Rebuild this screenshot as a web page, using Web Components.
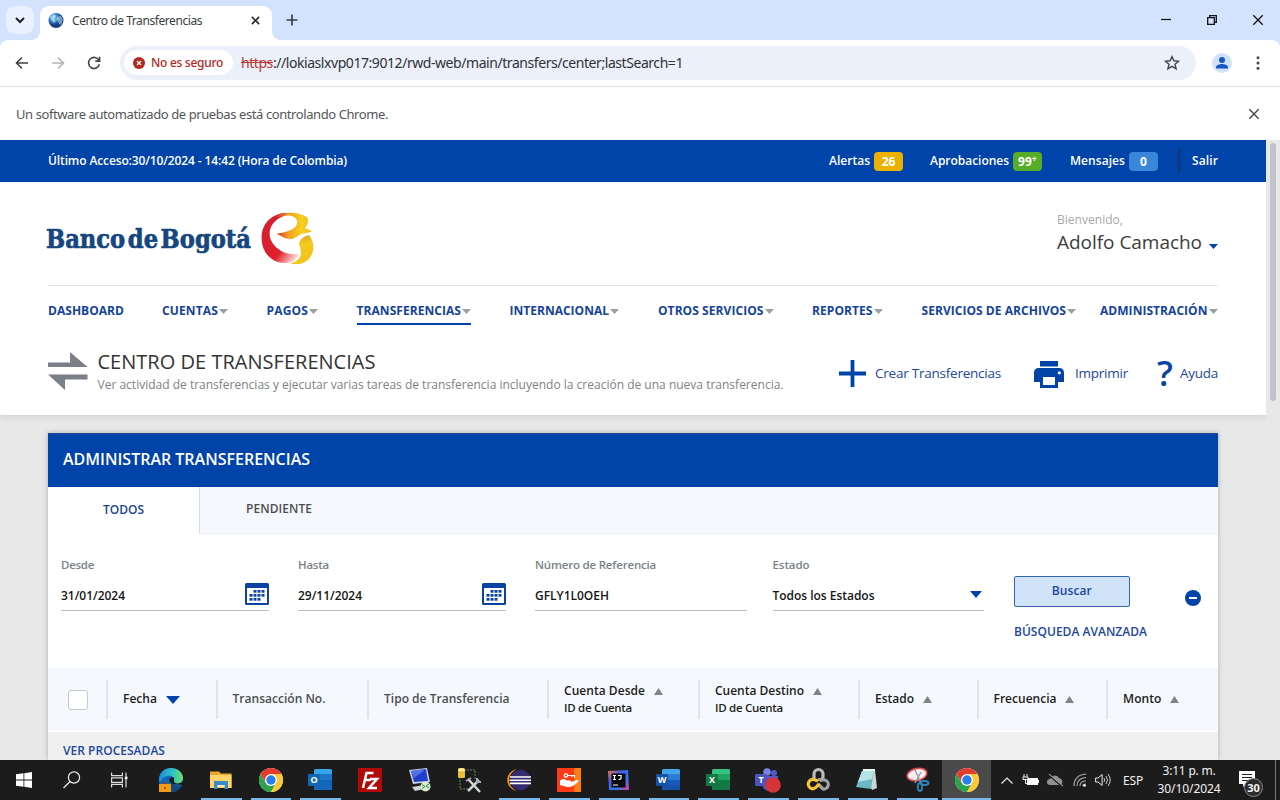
<!DOCTYPE html>
<html lang="es">
<head>
<meta charset="utf-8">
<title>Centro de Transferencias</title>
<style>
html,body{margin:0;height:800px;overflow:hidden}
body{font-family:"Open Sans","Noto Sans",sans-serif;background:#fff}
</style>
</head>
<body>
<desktop-screen></desktop-screen>
<script>
const define = (name, css, html, ready) => customElements.define(name, class extends HTMLElement {
  connectedCallback() {
    if (this.shadowRoot) return;
    const root = this.attachShadow({mode: 'open'});
    const markup = typeof html === 'function' ? html(this) : html;
    root.innerHTML = `<style>*{box-sizing:border-box}${css}</style>${markup}`;
    if (ready) ready(this, root);
  }
});

/* Inline text whose tracking is adjusted to a given width. */
define('fit-text', ':host{display:inline-block;white-space:nowrap;flex:none}span{display:inline-block;white-space:nowrap}', '<span><slot></slot></span>', (el, root) => {
  const w = parseFloat(el.getAttribute('w'));
  if (!w) return;
  const span = root.querySelector('span');
  const n = el.textContent.length;
  const natural = span.getBoundingClientRect().width;
  span.style.letterSpacing = ((w - natural) / n) + 'px';
  el.style.width = w + 'px';
});

const chrome = `<circle cx="12" cy="12" r="12" fill="#fff"/><path d="M1.6 6A12 12 0 0 0 12 24l5.2-9L12 12 6.8 15z" fill="#2ba24c"/><path d="M22.4 6A12 12 0 0 1 12 24l5.2-9L12 12V6z" fill="#fcc934"/><path d="M12 6h10.400A12 12 0 0 0 1.600 6l5.200 9z" fill="#e33b2e"/><circle cx="12" cy="12" r="6" fill="#fff"/><circle cx="12" cy="12" r="4.700" fill="#2b7de9"/>`;
const office = (l, a, b, c, d) => `<rect x="6" y="1" width="18" height="21" rx="1.500" fill="${a}"/><path d="M6 6h18v6H6z" fill="${b}"/><path d="M6 12h18v5H6z" fill="${c}"/><path d="M6 17h18v3.500a1.500 1.500 0 0 1-1.500 1.500h-15A1.500 1.500 0 0 1 6 20.500z" fill="${d}"/><rect x="0" y="6" width="12" height="12" rx="1" fill="${d}"/><text x="6" y="15.200" font-family="Open Sans,sans-serif" font-weight="700" font-size="9" text-anchor="middle" fill="#fff">${l}</text>`;
const calDots = [[4,0],[8,0],[12,0],[0,4],[4,4],[8,4],[12,4],[0,8],[4,8],[8,8]].map(([x,y]) => `<rect x="${x+4.500}" y="${y+7}" width="3" height="2.700" fill="#0a43a3"/>`).join('');

const icons = {
  down: [16,16,'<path d="M4 6l4 4 4-4" fill="none" stroke="#202124" stroke-width="2"/>'],
  globe: [16,16,'<defs><radialGradient id="g" cx=".35" cy=".3"><stop offset="0" stop-color="#9ad8f5"/><stop offset=".5" stop-color="#3a8ddb"/><stop offset="1" stop-color="#153f82"/></radialGradient></defs><circle cx="8" cy="7.500" r="7.500" fill="url(#g)"/><path d="M2 4l4-3 2 2-2 3 2 2-2 2-3-3zM9 4l4-1 2 4-2 5-2-1-1-3-2-1z" fill="#d4effc" opacity=".5"/>'],
  tabx: [10,10,'<path d="M1 1l8 8M9 1L1 9" stroke="#1f2023" stroke-width="1.700"/>'],
  plus: [12,12,'<path d="M6 .5v11M.5 6h11" stroke="#3b3e44" stroke-width="1.700"/>'],
  min: [10,10,'<path d="M0 4.500h10" stroke="#111" stroke-width="1.200"/>'],
  restore: [10,10,'<path d="M.7 2.700h6.600v6.600H.7zM2.700 2.500V.7h6.600v6.600H7.500" fill="none" stroke="#111" stroke-width="1.300"/>'],
  close: [10,10,'<path d="M.3.3l9.400 9.400M9.700.3L.3 9.700" stroke="#111" stroke-width="1.300"/>'],
  close2: [10,10,'<path d="M.3.3l9.400 9.400M9.700.3L.3 9.700" stroke="#474747" stroke-width="1.400"/>'],
  back: [14,14,'<path d="M13 7H2M7 1.500L1.500 7 7 12.500" fill="none" stroke="#3f4247" stroke-width="1.600"/>'],
  fwd: [14,14,'<path d="M1 7h11M7 1.500L12.500 7 7 12.500" fill="none" stroke="#b3b5b8" stroke-width="1.600"/>'],
  reload: [14,14,'<path d="M11.900 4.300A5.500 5.500 0 1 0 12.400 8.300M12.600 .8v4.300H8.300" fill="none" stroke="#3f4247" stroke-width="1.600"/>'],
  danger: [12,12,'<circle cx="6" cy="6" r="6" fill="#b3261e"/><path d="M4 4l4 4M8 4L4 8" stroke="#fff" stroke-width="1.400"/>'],
  star: [16,16,'<path d="M8 1.600l1.900 4.200 4.600.4-3.500 3 1.100 4.500L8 11.300l-4.100 2.400L5 9.200l-3.500-3 4.600-.4z" fill="none" stroke="#44474c" stroke-width="1.400"/>'],
  user: [20,20,'<circle cx="10" cy="10" r="10" fill="#d0e2fb"/><circle cx="10" cy="7" r="3" fill="#1557c0"/><path d="M4 15.500v-1.200c0-2.200 4-3.300 6-3.300s6 1.100 6 3.300v1.200z" fill="#1557c0"/>'],
  dots: [4,14,'<circle cx="2" cy="1.700" r="1.500" fill="#44474c"/><circle cx="2" cy="7" r="1.500" fill="#44474c"/><circle cx="2" cy="12.300" r="1.500" fill="#44474c"/>'],
  brand: [54,54,'<defs><linearGradient id="r" x1="0" y1="0" x2=".95" y2=".9"><stop offset=".1" stop-color="#cf2030"/><stop offset=".68" stop-color="#e2202c"/><stop offset=".8" stop-color="#ea6a6c"/><stop offset="1" stop-color="#fde3dc"/></linearGradient><linearGradient id="y" x1=".3" y1="0" x2=".5" y2="1"><stop offset="0" stop-color="#dd9c20"/><stop offset=".35" stop-color="#f5c91f"/><stop offset="1" stop-color="#f3c41c"/></linearGradient><linearGradient id="z" x1="0" y1="0" x2="1" y2="0"><stop offset="0" stop-color="#df2a28"/><stop offset=".35" stop-color="#f0a023"/><stop offset=".7" stop-color="#f8cf1e"/><stop offset="1" stop-color="#f0bf20"/></linearGradient></defs><path d="M25 .8C10 2 .5 12 .6 26 .7 41 11 51 24 51c7 0 12-3 14-9C31 43 23 42 16 36 5 27 5 10 25 3z" fill="url(#r)"/><path d="M15 4C24-1 38 0 46 5c2 4 1 8-2 11l7 3c-3 2-6 2-9 2.500-6 2-8 6-13 5.500-5 0-9-3-13-5.500 9-1 15-3 19-7.500 3-5 0-10-7-10.500-4-.2-8 .5-12 2z" fill="url(#z)"/><path d="M38 32c1-5 5-8 10-9 6 8 6 18-1 25-5 4-11 5-18 3.500C40 49 42 42 38 32z" fill="url(#y)"/>'],
  swap: [40,38,'<path d="M0 10.500h22V0l17.500 15H0zM39.500 22.500H0L17 38V27.500h22.500z" fill="#7b7f88"/>'],
  add: [27,27,'<path d="M13.500 0v27M0 13.500h27" stroke="#0043a9" stroke-width="3.800"/>'],
  print: [30,27,'<path d="M6 0h18v5.500H6z" fill="#0043a9"/><path d="M4.500 7h21A4.500 4.500 0 0 1 30 11.500V21h-6v6H6v-6H0v-9.500A4.500 4.500 0 0 1 4.500 7z" fill="#0043a9"/><path d="M9 16h12v8H9z" fill="#fff"/><circle cx="25.300" cy="11.800" r="1.600" fill="#fff"/>'],
  cal: [24,22,`<path d="M0 1.500A1.500 1.500 0 0 1 1.500 0h21A1.500 1.500 0 0 1 24 1.500v19a1.500 1.500 0 0 1-1.500 1.500h-21A1.500 1.500 0 0 1 0 20.500z" fill="#0a43a3"/><path d="M2 5h20v15H2z" fill="#fff"/>${calDots}`],
  caret: [9,5,'<path d="M0 0h9L4.500 5z" fill="#9a9fa3"/>'],
  bcaret: [9,5,'<path d="M0 0h9L4.500 5z" fill="#0043a9"/>'],
  select: [12,7,'<path d="M0 0h12L6 7z" fill="#0043a9"/>'],
  desc: [14,8,'<path d="M0 0h14L7 8z" fill="#0043a9"/>'],
  asc: [9,7,'<path d="M0 7h9L4.500 0z" fill="#808487"/>'],
  minus: [16,16,'<circle cx="8" cy="8" r="8" fill="#0043a9"/><path d="M4 8h8" stroke="#fff" stroke-width="2"/>'],
  win: [16,16,'<path d="M0 2.300l7.500-1v6.300H0zM8.300 1.200L16 0v7.600H8.300zM0 8.400h7.500v6.300L0 13.700zM8.300 8.400H16V16l-7.700-1.200z" fill="#fff"/>'],
  search: [18,18,'<circle cx="11" cy="6.500" r="5.600" fill="none" stroke="#eee" stroke-width="1.200"/><path d="M7 10.500L.5 17" stroke="#eee" stroke-width="1.300"/>'],
  task: [18,16,'<path d="M.6.500v3.200h10.800V.5M.6 15.500v-3.200h10.800v3.200M.6 5.800h10.800v4.500H.6zM15 .5v4M15 8v7.500" fill="none" stroke="#ddd" stroke-width="1.200"/><path d="M13.800 4.500h2.600v3h-2.600z" fill="#fff"/>'],
  edge: [24,24,'<defs><linearGradient id="e"><stop offset="0" stop-color="#168ee0"/><stop offset=".6" stop-color="#30c6bc"/><stop offset="1" stop-color="#73dc68"/></linearGradient></defs><circle cx="12" cy="12" r="12" fill="#1466b8"/><path d="M0 12C0 4 6 0 12 0s12 4 12 10c0 4-3 6-6 6-4 0-5-2-4-4 1-3-2-5-5-4-4 0-8 4-8 8z" fill="url(#e)"/><path d="M14 12c-1 5 4 7 9 5-2 4-6 7-10 7-2-3-3-7 1-12z" fill="#124b80"/><path d="M14 9c2 1 0 4 2 6 3 1 6 0 8-2v4l-10-1-4-3c0-2 2-4 4-4z" fill="#1c1c1c"/><rect x="0" y="16" width="12" height="8" fill="#f39a16"/><path d="M4 16v-1.500h4V16" fill="none" stroke="#8a4e06"/><path d="M5.300 19h1.500v2H5.300z" fill="#8a4e06"/>'],
  folder: [22,20,'<path d="M0 1.500h9l2 2h10.500V18H0z" fill="#e9a72b"/><path d="M0 5h21.500v13H0z" fill="#ffd56a"/><path d="M4 11h14v8h-3.500v-4h-7v4H4z" fill="#368dc9"/><path d="M7.500 15h7v2h-7z" fill="#f5e7ae"/>'],
  chrome: [24,24,chrome],
  outlook: [24,24,office('O','#38a7e8','#1b78c8','#0f68b5','#1467b8')],
  fz: [24,24,'<path d="M0 0h24v24H0z" fill="#b30808"/><path d="M5 20L8.500 5h7M7 12h6M12 11h7l-8 9h8" fill="none" stroke="#fff" stroke-width="2.500"/>'],
  remote: [24,24,'<path d="M1 2l18-2 3 14-17 2z" fill="#c8d4e2"/><path d="M3 3l15-2 2 12-14 1z" fill="#203dcb"/><path d="M3 3l15-2-12 9z" fill="#526fe4"/><path d="M4 19l12-2v4l-9 2z" fill="#ced4d6"/><circle cx="17.500" cy="18.500" r="5" fill="#d9edd2"/><path d="M14 16.500l3 2-3 2M21 16l-3 2 3 2" fill="none" stroke="#378b39"/>'],
  tools: [24,24,'<path d="M7 2h11v10M3 9v12h8" fill="none" stroke="#668e50" stroke-dasharray="2 1"/><rect x="1" y="0" width="7" height="10" rx="1.500" fill="#ecbd3c"/><ellipse cx="4.500" cy="1.700" rx="3.300" ry="1.500" fill="#fff0a0"/><path d="M11 11l12 13M22 12L11 23" stroke="#d1d5d8" stroke-width="2.500"/><path d="M9 13l5-3M20 10v4h4" stroke="#a7acb0" stroke-width="2" fill="none"/>'],
  eclipse: [24,22,'<path d="M10 0C-3 3-3 19 10 22-1 17 0 5 10 0z" fill="#f7941e"/><circle cx="13.500" cy="11" r="10.300" fill="#352c70"/><path d="M3 8h21M2.500 11.200h21.500M3 14.400h21" stroke="#fff" stroke-width="1.600"/>'],
  hand: [24,24,'<path d="M0 0h24v24H0z" fill="#ff3a17"/><path d="M17 0h7v24h-7z" fill="#ff7b16"/><path d="M3 12.500c3-2 5-2 7 0h3c2 0 2 2 0 2l7-2.500c2 0 2 1 1 2l-5 4c-3 1.500-6 1-8 .5L3 17z" fill="#fff"/><circle cx="9" cy="7.500" r="1.700" fill="none" stroke="#fff" stroke-width="1.300"/><path d="M11 7.500h6.500v2M15 7.500v1.800" fill="none" stroke="#fff" stroke-width="1.200"/>'],
  ij: [21,21,'<defs><linearGradient id="j" x1="0" y1="0" x2="1" y2="1"><stop offset="0" stop-color="#f77834"/><stop offset=".35" stop-color="#4a59e8"/><stop offset=".65" stop-color="#2781f4"/><stop offset="1" stop-color="#ec3a8f"/></linearGradient></defs><path d="M0 1l20-1 1 20H1z" fill="url(#j)"/><path d="M3.500 3.500h14v14h-14z" fill="#08080b"/><path d="M5 5.500h3M6.500 5.500v4M5 9.500h3M10 5.500h3v2.500q0 1.500-2.500 1.500M5 15h5" fill="none" stroke="#fff" stroke-width="1.200"/>'],
  word: [24,24,office('W','#41a5ee','#2b7cd3','#185abd','#1651aa')],
  excel: [24,24,office('X','#33c481','#21a366','#107c41','#147744')],
  teams: [26,25,'<circle cx="12" cy="4" r="3.800" fill="#7b83eb"/><circle cx="19" cy="5" r="3" fill="#5059c9"/><path d="M7 8h16v9q-2 6-8 6-6 0-8-6z" fill="#5059c9"/><rect x="0" y="6" width="12" height="12" rx="1" fill="#4b53bc"/><text x="6" y="15" text-anchor="middle" font-family="Open Sans,sans-serif" font-weight="700" font-size="9" fill="#fff">T</text><circle cx="18" cy="17" r="7.800" fill="#d63438"/>'],
  knot: [24,24,'<g fill="none" stroke-width="3.200"><path d="M8 11V6a4.500 4.500 0 0 1 9 0v3q0 2-3 4" stroke="#b8babc"/><path d="M12 11.500l6.500.5a4.500 4.500 0 1 1-1.500 9l-5-5" stroke="#a0a4a7"/><path d="M12 13l-4-1.500a4.600 4.600 0 1 0-2 9.300q4 0 7-5" stroke="#f5c432"/></g>'],
  note: [22,22,'<path d="M7 2l12-1 2 18-5 2z" fill="#cfd3d1"/><path d="M6 2l12-1-3 19L0 18z" fill="#69bac5"/><path d="M6 2l12-1-2 9-14 3z" fill="#b3e5e7"/><path d="M7 1h12" stroke="#eef5f4" stroke-width="2"/>'],
  snip: [23,24,'<ellipse cx="11" cy="6.500" rx="10" ry="6" fill="#f7eeee" stroke="#d64a4d" stroke-width="1.600" transform="rotate(-12 11 6.500)"/><path d="M9 2l6 13M15 4L9 15" stroke="#9a9fa5" stroke-width="1.500"/><ellipse cx="14" cy="19" rx="2.200" ry="4" fill="none" stroke="#2f87bc" stroke-width="1.800"/><ellipse cx="18.500" cy="15" rx="4" ry="2" fill="none" stroke="#2f87bc" stroke-width="1.800"/>'],
  up: [12,7,'<path d="M.5 6.500L6 1l5.500 5.500" fill="none" stroke="#eee" stroke-width="1.200"/>'],
  battery: [17,12,'<path d="M5 4h11v7H5zM16 6h1v3h-1z" fill="#fff"/><path d="M1 3h5v2.500H1zM2 0v3M5 0v3M3.500 5v4.500H5" fill="#222" stroke="#eee"/>'],
  cloud: [17,13,'<path d="M3 11a3 3 0 0 1 0-6 5 5 0 0 1 9-1 4 4 0 0 1 2 7z" fill="#919191"/><path d="M1 0l15 13" stroke="#222" stroke-width="2"/><path d="M2 0l14 12" stroke="#bbb"/>'],
  wifi: [14,14,'<g fill="none" stroke="#aaa" stroke-width="1.200"><path d="M1 13Q1 2 13 1M4 13Q4 5 13 4.500M7 13q0-5 6-5"/><path d="M10 13q0-2 3-2"/></g><circle cx="11.500" cy="12.500" r="1.300" fill="#fff"/>'],
  sound: [16,14,'<path d="M.6 5h2.500l4-3.500v11L3.100 9H.6z" fill="none" stroke="#eee"/><path d="M9 5q1.500 2 0 4M11 3q3 4 0 8M13 1q4.500 6 0 12" fill="none" stroke="#ccc"/>'],
  notice: [17,17,'<path d="M0 0h16v13H7l-3 3v-3H0z" fill="#fff"/><path d="M3 3.500h10M3 6.500h10M3 9.500h7" stroke="#222" stroke-width="1.200"/>']
};
define('ui-icon', ':host{display:inline-flex;flex:none}svg{display:block;overflow:visible}', el => {
  const [w, h, body] = icons[el.getAttribute('name')];
  const s = parseFloat(el.getAttribute('scale') || 1);
  return `<svg width="${w*s}" height="${h*s}" viewBox="0 0 ${w} ${h}">${body}</svg>`;
});

define('tab-strip', `
:host{display:flex;height:40px;background:#d3e3fd;padding-left:6px;align-items:flex-start;font-family:"Noto Sans",sans-serif}
.menu{width:28px;height:28px;margin-top:6px;border-radius:9px;background:#e9f1fe;display:grid;place-items:center}
.tab{position:relative;margin:6px 0 0 6px;width:232px;height:34px;background:#fff;border-radius:9px 9px 0 0;display:flex;align-items:center;padding:0 12px 5px 8px;font-size:12px;color:#3a3d41}
.tab:before,.tab:after{content:"";position:absolute;bottom:0;width:8px;height:8px}
.tab:before{left:-8px;background:radial-gradient(circle at 0 0,transparent 7.5px,#fff 8px)}
.tab:after{right:-8px;background:radial-gradient(circle at 100% 0,transparent 7.5px,#fff 8px)}
.tab fit-text{margin-left:8px;flex:1}.tab ui-icon:last-child{margin-left:auto}
.add{margin:14px 0 0 14px}.win{margin:15px 17.500px 0 auto;display:flex;gap:36px}`,
`<div class="menu"><ui-icon name="down"></ui-icon></div>
<div class="tab"><ui-icon name="globe"></ui-icon><fit-text w="130">Centro de Transferencias</fit-text><ui-icon name="tabx" scale=".9"></ui-icon></div>
<ui-icon class="add" name="plus"></ui-icon>
<div class="win"><ui-icon name="min"></ui-icon><ui-icon name="restore"></ui-icon><ui-icon name="close"></ui-icon></div>`);

define('address-bar', `
:host{display:block;background:#d3e3fd;font-family:"Noto Sans",sans-serif}
.bar{background:#fff;height:47px;border-radius:8px 8px 0 0;border-bottom:1px solid #dcdde1;display:flex;align-items:center;padding:0 20px 1px 15px}
.nav{display:flex;gap:22px;width:105px}
.url{width:1076px;height:34px;border-radius:17px;background:#ebf0fa;display:flex;align-items:center;padding:0 16px 0 4px;font-size:14px;color:#303235}
.chip{height:25px;width:109px;border-radius:13px;background:#fff;display:flex;align-items:center;gap:6px;padding-left:9px;margin-right:8px;color:#b3261e;font-size:12px;font-weight:500}
s{color:#b93b36}.url>ui-icon{margin-left:auto}.end{display:flex;align-items:center;gap:24px;margin-left:auto}`,
`<div class="bar"><div class="nav"><ui-icon name="back"></ui-icon><ui-icon name="fwd"></ui-icon><ui-icon name="reload"></ui-icon></div>
<div class="url"><div class="chip"><ui-icon name="danger"></ui-icon><fit-text w="72">No es seguro</fit-text></div><fit-text w="442"><s>https</s>://lokiaslxvp017:9012/rwd-web/main/transfers/center;lastSearch=1</fit-text><ui-icon name="star"></ui-icon></div>
<div class="end"><ui-icon name="user"></ui-icon><ui-icon name="dots"></ui-icon></div></div>`);

define('info-bar', `:host{display:flex;height:53px;background:#fff;align-items:center;justify-content:space-between;padding:0 21px 0 16px;font:13px "Noto Sans",sans-serif;color:#54565a}`,
`<fit-text w="372">Un software automatizado de pruebas está controlando Chrome.</fit-text><ui-icon name="close2"></ui-icon>`);

define('count-badge', `:host{display:inline-block;height:19px;min-width:29px;border-radius:4px;background:var(--c);color:#fff;font-size:12px;font-weight:700;line-height:19px;text-align:center}`, '<slot></slot>');

define('session-bar', `
:host{display:flex;height:42px;background:#0043a9;color:#fff;padding:0 48px;align-items:center;font-size:12px;font-weight:600}
fit-text{line-height:18px;margin-bottom:1px}
.r{margin-left:auto;display:flex;align-items:center}count-badge{margin:1px 0 0 4px}
i{width:2px;height:24px;background:#18356f;margin:0 12px 0 20px}`,
`<fit-text w="299">Último Acceso:30/10/2024 - 14:42 (Hora de Colombia)</fit-text>
<div class="r"><fit-text w="41">Alertas</fit-text><count-badge style="--c:#ecb100">26</count-badge>
<fit-text w="79" style="margin-left:27px">Aprobaciones</fit-text><count-badge style="--c:#57ac28">99<sup style="font-size:9px;line-height:0;vertical-align:4px">+</sup></count-badge>
<fit-text w="55" style="margin-left:28px">Mensajes</fit-text><count-badge style="--c:#3a86d8">0</count-badge><i></i><fit-text w="26">Salir</fit-text></div>`);

define('brand-header', `
:host{display:flex;height:104px;margin:0 48px;border-bottom:1px solid #e4e4e4;justify-content:space-between}
.logo{display:flex;align-items:flex-start;margin:29.5px 0 0 -2px}.logo svg{margin-top:8px;display:block;overflow:visible}.logo ui-icon{margin-left:9px}
text{word-spacing:-6px}
.user{padding-top:29px;width:161px}.hi{font-size:12px;line-height:18px;color:#a7a7a7}.name{display:flex;align-items:center;font-size:19px;line-height:27px;color:#3c3c3c}.name ui-icon{margin:7px 0 0 7px}`,
`<div class="logo"><svg width="206" height="38"><text x="0" y="28" textLength="205" lengthAdjust="spacingAndGlyphs" font-family="DejaVu Serif,serif" font-weight="700" font-size="25.500" fill="#15467f" stroke="#15467f" stroke-width=".7">Banco de Bogotá</text></svg><ui-icon name="brand"></ui-icon></div>
<div class="user"><div class="hi"><fit-text w="66">Bienvenido,</fit-text></div><div class="name"><fit-text w="145">Adolfo Camacho</fit-text><ui-icon name="bcaret"></ui-icon></div></div>`);

define('nav-item', `
:host{display:flex}div{display:flex;align-items:center;height:29px;padding-top:1px;border-bottom:2px solid transparent;color:#14439c;font-size:12px;font-weight:700}
:host([active]) div{border-color:#0043a9}ui-icon{margin:2px 0 0 1px}`,
el => `<div><fit-text w="${el.getAttribute('w')}">${el.getAttribute('label')}</fit-text>${el.hasAttribute('plain') ? '' : '<ui-icon name="caret"></ui-icon>'}</div>`);

define('main-nav', `:host{display:grid;height:48px;padding:10px 48px 0;grid-template-columns:114px 104.500px 90px 153px 148.500px 154px 109.500px 178.500px 1fr}`,
[['DASHBOARD',76,'plain'],['CUENTAS',56],['PAGOS',41.5],['TRANSFERENCIAS',104.5,'active'],['INTERNACIONAL',99.5],['OTROS SERVICIOS',105.5],['REPORTES',60.5],['SERVICIOS DE ARCHIVOS',144.5],['ADMINISTRACIÓN',107.5]]
.map(([l,w,f='']) => `<nav-item label="${l}" w="${w}" ${f}></nav-item>`).join(''));

define('page-title', `
:host{display:flex;height:81px;padding:0 48px;align-items:flex-start}
.sw{margin-top:18px}.t{margin:14px 0 0 9.5px}.h{font-size:20px;line-height:28px;color:#333}.s{font-size:12px;line-height:18px;color:#808285}
.a{margin:24px 0 0 auto;display:flex;align-items:center;height:30px;font-size:13.500px;color:#23479a}.q{font-size:35px;line-height:30px;font-weight:600;color:#0a43a3;margin:0 7px 0 29px}`,
`<ui-icon class="sw" name="swap"></ui-icon><div class="t"><div class="h"><fit-text w="278">CENTRO DE TRANSFERENCIAS</fit-text></div><div class="s"><fit-text w="686">Ver actividad de transferencias y ejecutar varias tareas de transferencia incluyendo la creación de una nueva transferencia.</fit-text></div></div>
<div class="a"><ui-icon name="add"></ui-icon><fit-text w="126" style="margin-left:9px">Crear Transferencias</fit-text><ui-icon name="print" style="margin:2px 11px 0 33px"></ui-icon><fit-text w="53">Imprimir</fit-text><fit-text class="q" w="16">?</fit-text><fit-text w="38">Ayuda</fit-text></div>`);

define('tab-row', `
:host{display:flex;height:47px;background:#f5f9fe;border-bottom:1px solid #eceff3;font-size:12px;font-weight:600;color:#4b4d50}
div{display:flex;align-items:center;justify-content:center}.on{width:152px;height:47px;padding-bottom:2px;background:#fff;border-right:1px solid #d9dcdf;color:#1b4496}.off{width:158px;height:43px}`,
`<div class="on"><fit-text w="41">TODOS</fit-text></div><div class="off"><fit-text w="66">PENDIENTE</fit-text></div>`);

define('form-field', `
:host{display:block;height:56px;border-bottom:1px solid #b9bbbd;font-size:12px;font-weight:600}
.l{line-height:18px;padding-top:1px;height:18px;font-size:11.500px;color:#7b8289}.v{display:flex;height:32px;margin-top:5px;align-items:center;justify-content:space-between;color:#151515}.v fit-text{padding-top:2px}`,
el => `<div class="l"><fit-text w="${el.getAttribute('lw')}">${el.getAttribute('label')}</fit-text></div><div class="v"><fit-text w="${el.getAttribute('vw')}">${el.getAttribute('value')}</fit-text>${el.hasAttribute('icon') ? `<ui-icon name="${el.getAttribute('icon')}" ${el.getAttribute('icon') === 'select' ? 'style="margin-right:2.5px;margin-top:1px"' : ''}></ui-icon>` : ''}</div>`);

define('search-form', `
:host{display:grid;height:134px;padding:21px 17px 0 13px;grid-template-columns:208px 208px 212px 211.500px 1fr 16px;column-gap:29px;align-items:start;background:#fff;font-size:12px;font-weight:600;color:#1b479e}
form-field:nth-of-type(4){margin-left:-3.500px;margin-right:3.500px}
.b{margin:21px 0 0 -2.500px}button{display:block;width:115.500px;height:31px;border:1px solid #3565b4;border-radius:2px;background:#d1e3f8;color:#1b479e;font:inherit;padding:0 0 1px;margin-bottom:16px}.b fit-text{line-height:18px}.m{margin-top:35px}`,
`<form-field label="Desde" lw="33" value="31/01/2024" vw="64" icon="cal"></form-field>
<form-field label="Hasta" lw="31" value="29/11/2024" vw="64" icon="cal"></form-field>
<form-field label="Número de Referencia" lw="121" value="GFLY1L0OEH" vw="74"></form-field>
<form-field label="Estado" lw="37" value="Todos los Estados" vw="102" icon="select"></form-field>
<div class="b"><button><fit-text w="40">Buscar</fit-text></button><fit-text w="133">BÚSQUEDA AVANZADA</fit-text></div><ui-icon class="m" name="minus"></ui-icon>`);

define('column-head', `
:host{display:flex;align-items:center;height:39px;border-left:2px solid #e1e4e8;padding-left:15px;font-size:12px;font-weight:600;color:#1c1c1c}
:host([soft]){color:#4a4d50}.r{display:flex;align-items:center;height:17px}.r ui-icon{margin:2px 0 0 8.500px}.two{font-size:11.500px}.one{margin-bottom:1px}`,
el => { const a = n => el.getAttribute(n); return `<div><div class="r ${a('sub') ? '' : 'one'}"><fit-text w="${a('w')}">${a('label')}</fit-text>${a('sort') ? `<ui-icon name="${a('sort')}"></ui-icon>` : ''}</div>${a('sub') ? `<div class="r two"><fit-text w="68">${a('sub')}</fit-text></div>` : ''}</div>`; });

define('table-head', `
:host{display:grid;height:64px;background:#f5f9fe;border-bottom:2px solid #fbfcfd;align-items:center;grid-template-columns:58px 109.500px 151.500px 180px 151px 160px 118.500px 129.500px 1fr}
.c{width:20px;height:20px;border:1px solid #c3c7cb;border-radius:3px;background:#fff;margin:2px 0 0 20px}`,
`<div class="c"></div>
<column-head label="Fecha" w="34" sort="desc"></column-head><column-head label="Transacción No." w="93" soft></column-head><column-head label="Tipo de Transferencia" w="125.5" soft></column-head>
<column-head label="Cuenta Desde" w="81" sort="asc" sub="ID de Cuenta"></column-head><column-head label="Cuenta Destino" w="89" sort="asc" sub="ID de Cuenta"></column-head>
<column-head label="Estado" w="39" sort="asc"></column-head><column-head label="Frecuencia" w="63" sort="asc"></column-head><column-head label="Monto" w="38.5" sort="asc"></column-head>`);

define('transfer-panel', `
:host{display:block;margin:18px 48px 0;height:327px;overflow:visible;background:#f0f0f0;box-shadow:0 0 5px rgba(0,0,0,.25)}
h2{margin:0;height:54px;background:#0043a9;color:#fff;font-size:16px;font-weight:600;line-height:51px;padding-left:15px;border-top:1px solid #1a4c92}
.p{padding:10px 15px 0;font-size:12px;line-height:18px;font-weight:600;color:#1b479e}`,
`<h2><fit-text w="247">ADMINISTRAR TRANSFERENCIAS</fit-text></h2><tab-row></tab-row><search-form></search-form><table-head></table-head><div class="p"><fit-text w="102">VER PROCESADAS</fit-text></div>`);

define('bank-page', `
:host{display:flex;height:620px;overflow:hidden;background:#e8e8e8}
main{width:1266px;height:620px;overflow:hidden}header{height:275px;background:#fff;box-shadow:0 2px 7px rgba(0,0,0,.1)}
aside{width:14px;padding:3px 4px 0;background:#e8e8e8}aside div{width:6px;height:258px;border-radius:3px;background:#c0c4ca}`,
`<main><header><session-bar></session-bar><brand-header></brand-header><main-nav></main-nav><page-title></page-title></header><transfer-panel></transfer-panel></main><aside><div></div></aside>`);

define('task-button', `
:host{display:flex;width:49.75px;height:40px;align-items:center;justify-content:center;position:relative}
:host([open]):after{content:"";position:absolute;left:5px;right:4px;bottom:0;height:2px;background:#76b9ed}
:host([icon="chrome"]) ui-icon{margin-left:2px}
:host([current]){background:#4a4a4a;width:48.500px}:host([current]):after{left:0;right:0}`, el => `<ui-icon name="${el.getAttribute('icon')}"></ui-icon>`);

define('task-bar', `
:host{display:flex;height:40px;background:#1c1c1c;color:#f2f2f2;font-family:"Noto Sans",sans-serif;font-size:12px;align-items:center}
.s{width:48px;display:grid;place-items:center}.apps{display:flex;margin-left:2px;width:849px}
.tray{display:flex;align-items:center}.tray>ui-icon{margin-right:8px}.clock{display:flex;flex-direction:column;align-items:center;width:64px;margin-left:14px;line-height:18px}
.n{position:relative;margin-left:18px;width:37px;height:40px;padding-top:11px;border-right:1px solid #777}
.n b{position:absolute;left:5px;top:18px;width:19px;height:19px;border-radius:50%;border:1px solid #888;background:#2c2c2c;font-size:11px;line-height:17px;text-align:center}`,
`<div class="s"><ui-icon name="win"></ui-icon></div><div class="s"><ui-icon name="search"></ui-icon></div><div class="s"><ui-icon name="task"></ui-icon></div>
<div class="apps">${['edge','folder*','chrome*','outlook*','fz','remote','tools','eclipse*','hand*','ij*','word*','excel*','teams*','knot*','note*','snip*'].map(n => `<task-button icon="${n.replace('*','')}" ${n.endsWith('*') ? 'open' : ''}></task-button>`).join('')}<task-button icon="chrome" open current></task-button></div>
<div class="tray"><ui-icon name="up" style="margin:0 9px 0 6px"></ui-icon><ui-icon name="battery"></ui-icon><ui-icon name="cloud" style="margin-right:9px"></ui-icon><ui-icon name="wifi"></ui-icon><ui-icon name="sound" style="margin-right:12px"></ui-icon><fit-text w="20">ESP</fit-text>
<div class="clock"><fit-text w="53">3:11 p. m.</fit-text><fit-text w="63">30/10/2024</fit-text></div><div class="n"><ui-icon name="notice"></ui-icon><b>30</b></div></div>`);

define('desktop-screen', ':host{display:flex;flex-direction:column;width:1280px;height:800px;overflow:hidden}:host>*{flex:none}', '<tab-strip></tab-strip><address-bar></address-bar><info-bar></info-bar><bank-page></bank-page><task-bar></task-bar>');
</script>
</body>
</html>
